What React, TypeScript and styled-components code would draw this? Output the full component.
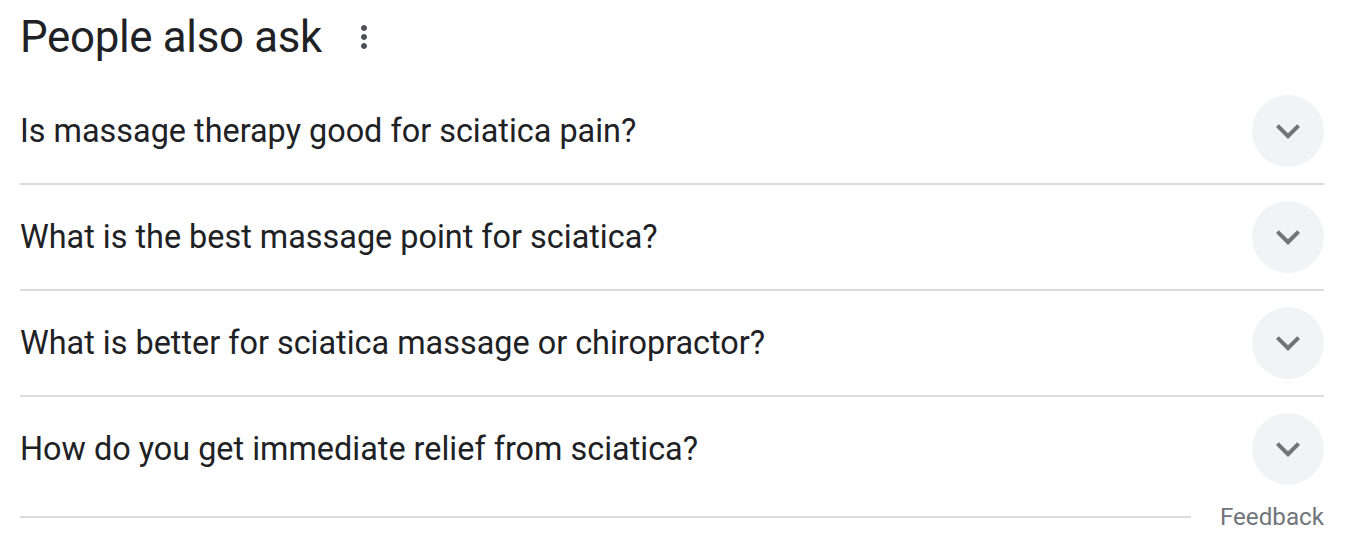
import React from "react";
import styled, { createGlobalStyle } from "styled-components";

const Global = createGlobalStyle`
  html, body { margin: 0; padding: 0; background: #fff; }
  body { font-family: Roboto, "Liberation Sans", Arial, sans-serif; color: #202124; }
`;

const Wrap = styled.div`
  width: 1304px;
  padding-left: 20px;
  display: flex;
  flex-direction: column;
`;

const Header = styled.div`
  height: 79px;
  display: flex;
  align-items: center;
  gap: 24px;
  box-sizing: border-box;
  padding-bottom: 6px;
`;

const Title = styled.h2`
  margin: 0;
  font-size: 43.8px;
  font-weight: 400;
  line-height: 52px;
  color: #202124;
  letter-spacing: -0.3px;
`;

const IconBtn = styled.button`
  border: 0;
  background: transparent;
  padding: 0;
  width: 36px;
  height: 36px;
  display: flex;
  align-items: center;
  justify-content: center;
  color: #4d5156;
  cursor: pointer;
`;

const Row = styled.div<{ $last?: boolean }>`
  height: 104px;
  display: flex;
  align-items: center;
  justify-content: space-between;
  border-bottom: ${(p) => (p.$last ? "0" : "2px solid #dadce0")};
`;

const Question = styled.div`
  font-size: 32.4px;
  line-height: 40px;
  color: #202124;
`;

const Circle = styled.div`
  width: 72px;
  height: 72px;
  border-radius: 50%;
  background: #f1f3f4;
  display: flex;
  align-items: center;
  justify-content: center;
  color: #70757a;
  flex-shrink: 0;
`;

const Footer = styled.div`
  height: 32px;
  display: flex;
  align-items: center;
  gap: 29px;
`;

const Line = styled.div`
  flex: 1;
  height: 2px;
  background: #dadce0;
`;

const Feedback = styled.span`
  font-size: 24.2px;
  line-height: 30px;
  color: #70757a;
`;

const questions = [
  "Is massage therapy good for sciatica pain?",
  "What is the best massage point for sciatica?",
  "What is better for sciatica massage or chiropractor?",
  "How do you get immediate relief from sciatica?",
];

const MoreVert = () => (
  <svg width="36" height="36" viewBox="0 0 24 24" fill="currentColor">
    <path d="M12 8c1.1 0 2-.9 2-2s-.9-2-2-2-2 .9-2 2 .9 2 2 2zm0 2c-1.1 0-2 .9-2 2s.9 2 2 2 2-.9 2-2-.9-2-2-2zm0 6c-1.1 0-2 .9-2 2s.9 2 2 2 2-.9 2-2-.9-2-2-2z" />
  </svg>
);

const ExpandMore = () => (
  <svg width="48" height="48" viewBox="0 0 24 24" fill="currentColor">
    <path d="M16.59 8.59L12 13.17 7.41 8.59 6 10l6 6 6-6z" />
  </svg>
);

export default function App() {
  return (
    <>
      <Global />
      <Wrap>
        <Header>
          <Title>People also ask</Title>
          <IconBtn aria-label="More options">
            <MoreVert />
          </IconBtn>
        </Header>
        {questions.map((q, i) => (
          <Row key={q} $last={i === questions.length - 1}>
            <Question>{q}</Question>
            <Circle>
              <ExpandMore />
            </Circle>
          </Row>
        ))}
        <Footer>
          <Line />
          <Feedback>Feedback</Feedback>
        </Footer>
      </Wrap>
    </>
  );
}
